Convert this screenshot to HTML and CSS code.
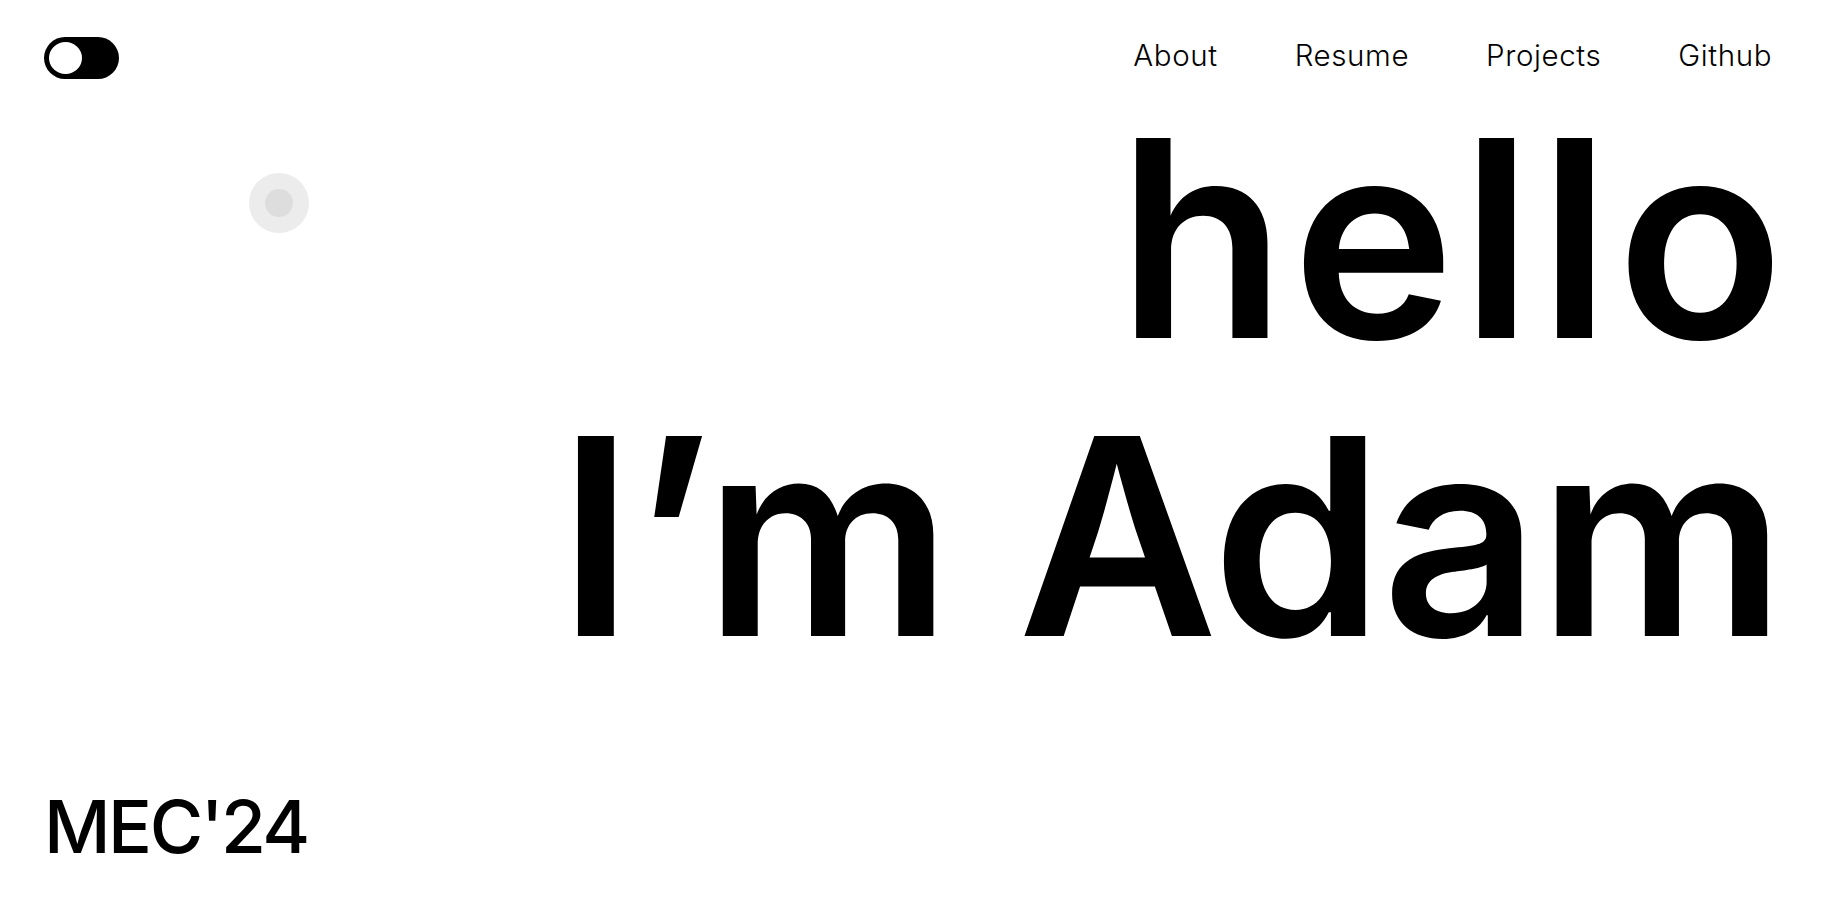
FILE: index.html
```html
<!DOCTYPE html>
<html lang="en">
<head>
<meta charset="utf-8">
<title>Adam</title>
<link rel="stylesheet" href="styles.css">
</head>
<body>
<div class="page">
  <header class="header">
    <button class="toggle" aria-label="Toggle theme"><span class="knob"></span></button>
    <nav class="nav">
      <a href="#">About</a>
      <a href="#">Resume</a>
      <a href="#">Projects</a>
      <a href="#">Github</a>
    </nav>
  </header>
  <main class="hero">
    <h1 class="title"><span class="line line-1">hello</span><span class="line line-2">I’m Adam</span></h1>
  </main>
  <footer class="footer">MEC'24</footer>
  <div class="cursor"><span class="cursor-dot"></span></div>
</div>
</body>
</html>
```

FILE: styles.css
```css
* { box-sizing: border-box; }
html, body { margin: 0; padding: 0; background: #fff; }
body {
  font-family: "Inter", "Liberation Sans", sans-serif;
  color: #000;
  overflow: hidden;
}
.page {
  position: relative;
  width: 1826px;
  height: 920px;
  padding: 37px 44px 0 44px;
}
.header {
  display: flex;
  justify-content: space-between;
  align-items: center;
  height: 42px;
}
.toggle {
  width: 75px;
  height: 42px;
  border: none;
  border-radius: 21px;
  background: #000;
  padding: 5px;
  display: flex;
  align-items: center;
  cursor: pointer;
}
.knob {
  width: 33px;
  height: 32px;
  border-radius: 50%;
  background: #fff;
}
.nav {
  display: flex;
  gap: 77px;
  margin-top: -7px;
  padding-right: 10px;
}
.nav a {
  color: #000;
  text-decoration: none;
  font-size: 29.5px;
  font-weight: 300;
  letter-spacing: 0.6px;
}
.hero {
  margin-top: 10px;
  margin-right: -2px;
  display: flex;
  justify-content: flex-end;
}
.title {
  margin: 0;
  font-size: 275px;
  font-weight: 560;
  line-height: 298px;
  text-align: right;
  display: flex;
  flex-direction: column;
  align-items: flex-end;
}
.line { display: block; white-space: nowrap; }
.line-1 { letter-spacing: 6px; margin-right: -6px; }
.line-2 { letter-spacing: -1.7px; }
.footer {
  margin-top: 97px;
  font-size: 73px;
  font-weight: 500;
  letter-spacing: -2.5px;
  line-height: normal;
}
.cursor {
  position: absolute;
  left: 249px;
  top: 173px;
  width: 60px;
  height: 60px;
  border-radius: 50%;
  background: #ececec;
  display: flex;
  align-items: center;
  justify-content: center;
}
.cursor-dot {
  width: 28px;
  height: 28px;
  border-radius: 50%;
  background: #dddddd;
}
```
